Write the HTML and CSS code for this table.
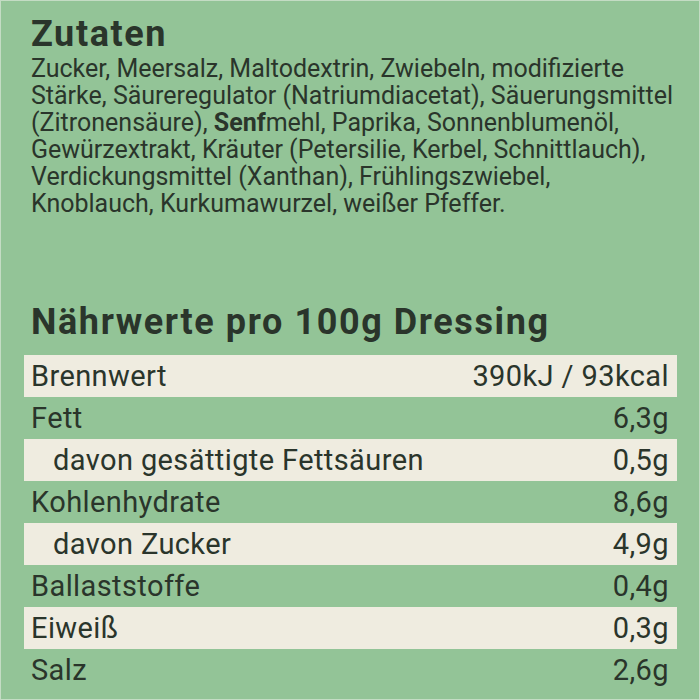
FILE: index.html
```html
<!DOCTYPE html>
<html lang="de">
<head>
<meta charset="utf-8">
<link rel="stylesheet" href="styles.css">
</head>
<body>
<div class="page">
  <h1 class="title">Zutaten</h1>
  <p class="ingredients">Zucker, Meersalz, Maltodextrin, Zwiebeln, modifizierte<br>Stärke, Säureregulator (Natriumdiacetat), Säuerungsmittel<br>(Zitronensäure), <b>Senf</b>mehl, Paprika, Sonnenblumenöl,<br>Gewürzextrakt, Kräuter (Petersilie, Kerbel, Schnittlauch),<br>Verdickungsmittel (Xanthan), Frühlingszwiebel,<br>Knoblauch, Kurkumawurzel, weißer Pfeffer.</p>
  <h2 class="subtitle">Nährwerte pro 100g Dressing</h2>
  <div class="table">
    <div class="row light"><span>Brennwert</span><span>390kJ / 93kcal</span></div>
    <div class="row"><span>Fett</span><span>6,3g</span></div>
    <div class="row light sub"><span>davon gesättigte Fettsäuren</span><span>0,5g</span></div>
    <div class="row"><span>Kohlenhydrate</span><span>8,6g</span></div>
    <div class="row light sub"><span>davon Zucker</span><span>4,9g</span></div>
    <div class="row"><span>Ballaststoffe</span><span>0,4g</span></div>
    <div class="row light"><span>Eiweiß</span><span>0,3g</span></div>
    <div class="row"><span>Salz</span><span>2,6g</span></div>
  </div>
</div>
</body>
</html>
```

FILE: styles.css
```css
html, body {
  margin: 0;
  padding: 0;
}
body {
  width: 700px;
  height: 700px;
  background: #93c497;
  font-family: Roboto, "Noto Sans", sans-serif;
  color: #2a352b;
}
.page {
  box-sizing: border-box;
  width: 700px;
  height: 700px;
  border: 1px solid #c4dcc4;
  padding: 12px 23px 0 23px;
}
.title {
  margin: 0 0 0 7px;
  font-size: 36px;
  font-weight: 700;
  line-height: 42px;
  letter-spacing: 1.6px;
}
.ingredients {
  margin: 0 0 0 7px;
  width: 660px;
  font-size: 25px;
  line-height: 27px;
  font-weight: 400;
  white-space: nowrap;
}
.ingredients b {
  font-weight: 700;
}
.subtitle {
  margin: 85px 0 0 7px;
  font-size: 36px;
  font-weight: 700;
  line-height: 40px;
  letter-spacing: 1.6px;
}
.table {
  margin-top: 13px;
  width: 653px;
  display: flex;
  flex-direction: column;
}
.row {
  height: 42px;
  display: flex;
  justify-content: space-between;
  align-items: center;
  padding: 0 8px 0 7px;
  font-size: 29px;
  letter-spacing: 0.4px;
}
.row.light {
  background: #efece0;
}
.row.sub span:first-child {
  padding-left: 22px;
}
```
